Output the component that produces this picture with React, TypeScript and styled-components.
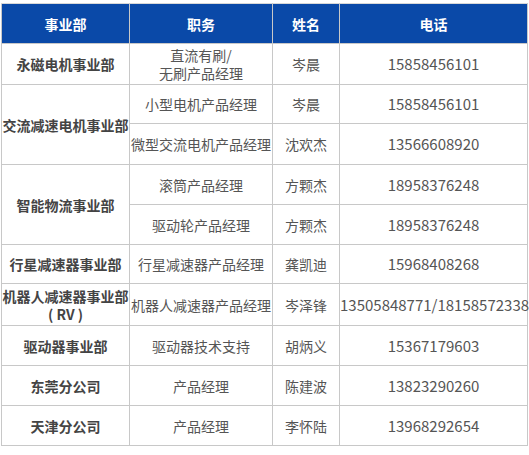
import styled, { createGlobalStyle } from "styled-components";

interface IRow {
  dept?: string;
  deptSpan?: number;
  role: string;
  name: string;
  phone: string;
  height: number;
}

const rows: IRow[] = [
  { dept: "永磁电机事业部", role: "直流有刷/\n无刷产品经理", name: "岑晨", phone: "15858456101", height: 41 },
  { dept: "交流减速电机事业部", deptSpan: 2, role: "小型电机产品经理", name: "岑晨", phone: "15858456101", height: 39 },
  { role: "微型交流电机产品经理", name: "沈欢杰", phone: "13566608920", height: 41 },
  { dept: "智能物流事业部", deptSpan: 2, role: "滚筒产品经理", name: "方颗杰", phone: "18958376248", height: 40 },
  { role: "驱动轮产品经理", name: "方颗杰", phone: "18958376248", height: 40 },
  { dept: "行星减速器事业部", role: "行星减速器产品经理", name: "龚凯迪", phone: "15968408268", height: 39 },
  { dept: "机器人减速器事业部\n( RV )", role: "机器人减速器产品经理", name: "岑泽锋", phone: "13505848771/18158572338", height: 42 },
  { dept: "驱动器事业部", role: "驱动器技术支持", name: "胡炳义", phone: "15367179603", height: 40 },
  { dept: "东莞分公司", role: "产品经理", name: "陈建波", phone: "13823290260", height: 40 },
  { dept: "天津分公司", role: "产品经理", name: "李怀陆", phone: "13968292654", height: 40 },
];

const GlobalStyle = createGlobalStyle`
  body {
    margin: 0;
    background: #fff;
    font-family: "Noto Sans CJK SC", "Noto Sans", sans-serif;
  }
`;

const App = () => {
  return (
    <>
      <GlobalStyle />
      <Page>
        <Table>
          <colgroup>
            <col style={{ width: 128 }} />
            <col style={{ width: 143 }} />
            <col style={{ width: 67 }} />
            <col style={{ width: 188 }} />
          </colgroup>
          <thead>
            <HeadRow>
              <HeadCell>事业部</HeadCell>
              <HeadCell>职务</HeadCell>
              <HeadCell>姓名</HeadCell>
              <HeadCell>电话</HeadCell>
            </HeadRow>
          </thead>
          <tbody>
            {rows.map((r, i) => (
              <Row key={i} $height={r.height}>
                {r.dept ? <DeptCell rowSpan={r.deptSpan || 1}>{r.dept}</DeptCell> : null}
                <Cell>{r.role}</Cell>
                <Cell>{r.name}</Cell>
                <PhoneCell>{r.phone}</PhoneCell>
              </Row>
            ))}
          </tbody>
        </Table>
      </Page>
    </>
  );
};

const Page = styled.div`
  padding: 3px 0 0 1px;
`;

const Table = styled.table`
  border-collapse: collapse;
  table-layout: fixed;
  width: 526px;
  font-size: 14px;
  color: #555;
`;

const HeadRow = styled.tr`
  height: 40px;
  background: #0a49a8;
`;

const HeadCell = styled.th`
  color: #fff;
  font-weight: bold;
  font-size: 14px;
  text-align: center;
  vertical-align: middle;
  padding: 0;
  border: 1px solid #c8c8c8;
  border-top-color: #d8d8d8;
`;

const Row = styled.tr<{ $height: number }>`
  height: ${(p) => p.$height}px;
`;

const Cell = styled.td`
  text-align: center;
  vertical-align: middle;
  padding: 0;
  line-height: 18px;
  white-space: pre-line;
  border: 1px solid #c8c8c8;
`;

const DeptCell = styled(Cell)`
  font-weight: bold;
  color: #444;
  white-space: pre;
`;

const PhoneCell = styled(Cell)`
  font-size: 15px;
  white-space: nowrap;
`;

export default App;
